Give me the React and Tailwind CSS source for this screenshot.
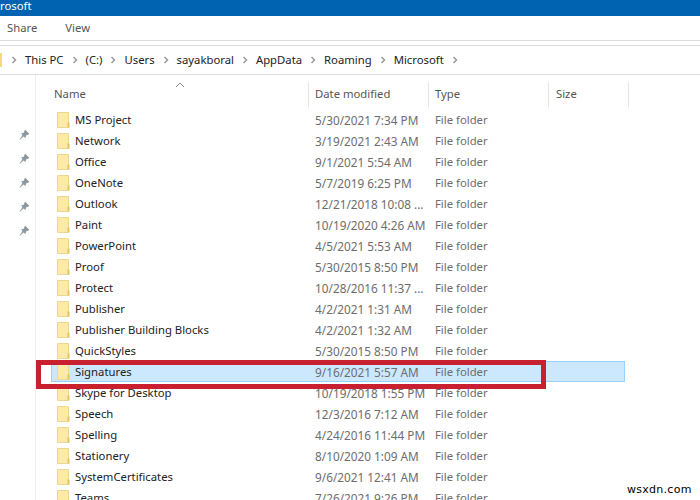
const rows = [
  ["MS Project", "5/30/2021 7:34 PM"],
  ["Network", "3/19/2021 2:43 AM"],
  ["Office", "9/1/2021 5:54 AM"],
  ["OneNote", "5/7/2019 6:25 PM"],
  ["Outlook", "12/21/2018 10:08 ..."],
  ["Paint", "10/19/2020 4:26 AM"],
  ["PowerPoint", "4/5/2021 5:53 AM"],
  ["Proof", "5/30/2015 8:50 PM"],
  ["Protect", "10/28/2016 11:37 ..."],
  ["Publisher", "4/2/2021 1:31 AM"],
  ["Publisher Building Blocks", "4/2/2021 1:32 AM"],
  ["QuickStyles", "5/30/2015 8:50 PM"],
  ["Signatures", "9/16/2021 5:57 AM", true],
  ["Skype for Desktop", "10/19/2018 1:55 PM"],
  ["Speech", "12/3/2016 7:12 AM"],
  ["Spelling", "4/24/2016 11:44 PM"],
  ["Stationery", "8/10/2020 1:09 AM"],
  ["SystemCertificates", "9/6/2021 12:41 AM"],
  ["Teams", "7/26/2021 9:26 PM"],
];

const crumbs = ["This PC", "(C:)", "Users", "sayakboral", "AppData", "Roaming", "Microsoft"];

const Folder = () => (
  <svg width="13" height="16" viewBox="0 0 13 16" className="shrink-0">
    <path d="M0.5 0.5H11.5V15.5H0.5Z" fill="#fdeaa8" stroke="#ecd690" />
    <path d="M10.5 15.5V10.5H12.5V15.5Z" fill="#e6c25e" />
  </svg>
);

const Chevron = () => (
  <svg width="6" height="8" viewBox="0 0 6 8" className="shrink-0">
    <path d="M1.5 1L4.5 4L1.5 7" fill="none" stroke="#9a9a9a" strokeWidth="1.5" />
  </svg>
);

const Pin = () => (
  <svg width="12" height="12" viewBox="0 0 12 12">
    <path d="M7 0.5L11.5 5L10 5.5L8 6.5L7.5 9L5.5 7.5L1 11.5L4.5 6L3 4.5L5.5 4L6.5 2Z" fill="#8c96a0" />
  </svg>
);

export default function App() {
  return (
    <div className="relative flex h-[500px] w-[700px] flex-col overflow-hidden bg-white text-[11.3px] font-['Noto_Sans',sans-serif]">
      <div className="h-4 shrink-0 bg-[#0063b1] text-[11.3px] leading-[11px] text-white">rosoft</div>

      <div className="flex h-[25px] shrink-0 items-center gap-[28px] border-b border-[#dcdcdc] pl-[7px] text-[#555]">
        <span>Share</span>
        <span>View</span>
      </div>

      <div className="h-1 shrink-0" />

      <div className="flex h-[30px] shrink-0 items-center border-y border-[#dcdcdc] text-[#222]">
        <div className="h-[14px] w-[2px] bg-[#f5d97e]" />
        <div className="ml-[9px] flex items-center gap-2">
          <Chevron />
          {crumbs.map((c) => (
            <div key={c} className="flex items-center gap-2">
              <span>{c}</span>
              <Chevron />
            </div>
          ))}
        </div>
      </div>

      <div className="flex min-h-0 flex-1">
        <div className="flex w-9 shrink-0 flex-col border-r border-[#eeeeee] pt-[54px]">
          <div className="flex flex-col items-end gap-3 pr-[5px]">
            <Pin />
            <Pin />
            <Pin />
            <Pin />
            <Pin />
          </div>
          <div className="mt-[285px] h-[24px] w-[33px] bg-[#e4e4e4]" />
        </div>

        <div className="min-w-0 flex-1 pl-[15px]">
          <div className="relative mt-[7px] flex h-[25px] text-[#555]">
            <svg width="10" height="6" viewBox="0 0 10 6" className="absolute left-[124px] top-0">
              <path d="M1 5L5 1L9 5" fill="none" stroke="#888" />
            </svg>
            <div className="flex w-[258px] items-center border-r border-[#e5e5e5] pl-[3px]">Name</div>
            <div className="flex w-[120px] items-center border-r border-[#e5e5e5] pl-[6px]">Date modified</div>
            <div className="flex w-[120px] items-center border-r border-[#e5e5e5] pl-[6px]">Type</div>
            <div className="flex w-[80px] items-center border-r border-[#e5e5e5] pl-[7px]">Size</div>
          </div>

          <div className="mt-[2px] w-[574px]">
            {rows.map(([name, date, selected]) => (
              <div
                key={name}
                className={`flex h-[21px] items-center ${selected ? "bg-[#cce8ff] outline outline-1 -outline-offset-1 outline-[#99d1ff]" : ""}`}
              >
                <div className="flex w-[258px] items-center gap-[5px] pl-[6px] text-[#222]">
                  <Folder />
                  <span className="pt-[2px]">{name}</span>
                </div>
                <div className="w-[120px] pl-[6px] pt-[2px] text-[11.8px] text-[#6d6d6d]">{date}</div>
                <div className="pl-[6px] pt-[2px] text-[#6d6d6d]">File folder</div>
              </div>
            ))}
          </div>
        </div>
      </div>

      <div className="absolute left-[36px] top-[360px] h-[29px] w-[510px] border-[5px] border-[#c9202f]" />
      <div className="absolute left-[627px] top-[484px] text-[11px] leading-none tracking-wide text-black font-['DejaVu_Sans',sans-serif]">wsxdn.com</div>
    </div>
  );
}
